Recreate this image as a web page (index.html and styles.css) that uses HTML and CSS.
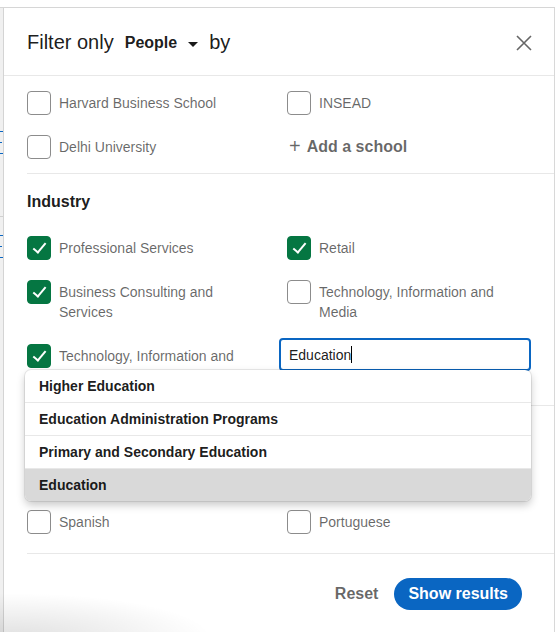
FILE: index.html
```html
<!DOCTYPE html>
<html lang="en">
<head>
  <meta charset="UTF-8">
  <meta name="viewport" content="width=device-width, initial-scale=1.0">
  <title>Filter people</title>
  <link rel="stylesheet" href="styles.css">
</head>
<body>
  <div class="screen">
    <div class="page-edge">
      <span class="edge-link" style="margin-top: 123px"></span>
      <span class="edge-link short" style="margin-top: 10px"></span>
      <span class="edge-link" style="margin-top: 10px"></span>
      <span class="edge-rule" style="margin-top: 62px"></span>
      <span class="edge-link" style="margin-top: 18px"></span>
      <span class="edge-link short" style="margin-top: 10px"></span>
      <span class="edge-link" style="margin-top: 10px"></span>
    </div>

    <div class="modal">
      <div class="modal-header">
        <div class="modal-title">
          Filter only
          <span class="type-select">People <span class="caret"></span></span>
          by
        </div>
        <button class="close-button" aria-label="Dismiss">
          <svg width="16" height="16" viewBox="0 0 16 16">
            <path d="M1 1 L15 15 M15 1 L1 15" stroke="#666" stroke-width="1.6" fill="none"/>
          </svg>
        </button>
      </div>

      <div class="modal-body">
        <div class="filter-section schools">
          <div class="option-grid">
            <label class="option"><span class="checkbox"></span><span class="option-text">Harvard Business School</span></label>
            <label class="option"><span class="checkbox"></span><span class="option-text">INSEAD</span></label>
            <label class="option"><span class="checkbox"></span><span class="option-text">Delhi University</span></label>
            <button class="add-button"><span class="plus">+</span> Add a school</button>
          </div>
        </div>

        <div class="filter-section industry">
          <div class="section-title">Industry</div>
          <div class="option-grid">
            <label class="option"><span class="checkbox checked"></span><span class="option-text">Professional Services</span></label>
            <label class="option"><span class="checkbox checked"></span><span class="option-text">Retail</span></label>
            <label class="option"><span class="checkbox checked"></span><span class="option-text">Business Consulting and Services</span></label>
            <label class="option"><span class="checkbox"></span><span class="option-text">Technology, Information and Media</span></label>
            <label class="option"><span class="checkbox checked"></span><span class="option-text">Technology, Information and Media</span></label>
            <div class="typeahead">
              <div class="typeahead-input">Education<span class="text-cursor"></span></div>
              <ul class="typeahead-menu">
                <li>Higher Education</li>
                <li>Education Administration Programs</li>
                <li>Primary and Secondary Education</li>
                <li class="active">Education</li>
              </ul>
            </div>
          </div>
        </div>

        <div class="filter-section language">
          <div class="section-title">Profile language</div>
          <div class="option-grid">
            <label class="option"><span class="checkbox"></span><span class="option-text">English</span></label>
            <label class="option"><span class="checkbox"></span><span class="option-text">French</span></label>
            <label class="option"><span class="checkbox"></span><span class="option-text">Spanish</span></label>
            <label class="option"><span class="checkbox"></span><span class="option-text">Portuguese</span></label>
          </div>
        </div>
      </div>

      <div class="modal-footer">
        <button class="reset-button">Reset</button>
        <button class="primary-button">Show results</button>
      </div>

      <div class="corner-haze"></div>
    </div>
  </div>
</body>
</html>
```

FILE: styles.css
```css
body {
  margin: 0;
  overflow: hidden;
  background: #fff;
  font-family: "Liberation Sans", Arial, sans-serif;
  color: rgba(0, 0, 0, 0.9);
}

.screen {
  display: flex;
  margin-top: 7px;
  border-top: 1px solid #d6d6d6;
  height: 624px;
  overflow: hidden;
}

/* strip of the page behind the dialog */
.page-edge {
  width: 3px;
  background: #f0f0f0;
  border-right: 1px solid #d4d4d4;
  display: flex;
  flex-direction: column;
}

.edge-link {
  display: block;
  height: 1px;
  background: #0a66c2;
}

.edge-link.short {
  width: 2px;
}

.edge-rule {
  display: block;
  height: 1px;
  background: #d0d0d0;
}

.modal {
  flex: 1;
  position: relative;
  background: #fff;
  border-right: 1px solid #d8d8d8;
  display: flex;
  flex-direction: column;
}

.modal-header {
  height: 67px;
  flex: none;
  display: flex;
  align-items: center;
  justify-content: space-between;
  padding: 0 22px 0 23px;
  border-bottom: 1px solid #e8e8e8;
}

.modal-title {
  font-size: 20px;
  display: flex;
  align-items: center;
  gap: 11px;
  padding-top: 2px;
}

.type-select {
  font-size: 16px;
  font-weight: 700;
  display: flex;
  align-items: center;
  gap: 11px;
  padding-top: 1px;
}

.caret {
  width: 0;
  height: 0;
  border-left: 5px solid transparent;
  border-right: 5px solid transparent;
  border-top: 5px solid rgba(0, 0, 0, 0.9);
  margin-top: 2px;
}

.close-button {
  background: none;
  border: none;
  padding: 0;
  width: 16px;
  height: 16px;
  margin-top: 3px;
  cursor: pointer;
}

.modal-body {
  padding-left: 23px;
}

.filter-section {
  border-bottom: 1px solid #e8e8e8;
}

.schools {
  padding: 15px 0 14px;
}

.industry {
  padding: 16px 0 17px;
}

.language {
  padding: 14px 0 19px;
}

.section-title {
  font-size: 16px;
  font-weight: 700;
  line-height: 24px;
  margin-bottom: 22px;
}

.option-grid {
  width: 504px;
  display: grid;
  grid-template-columns: 260px 244px;
  row-gap: 20px;
}

.option {
  display: flex;
  align-items: flex-start;
  gap: 8px;
  font-size: 14px;
  line-height: 20px;
  color: rgba(0, 0, 0, 0.6);
}

.option-text {
  padding: 2px 0;
  max-width: 200px;
}

.checkbox {
  flex: none;
  width: 22px;
  height: 22px;
  border: 1px solid #8c8c8c;
  border-radius: 4px;
  position: relative;
}

.checkbox.checked {
  background: #057642;
  border-color: #057642;
}

.checkbox.checked::after {
  content: "";
  position: absolute;
  left: 8px;
  top: 3px;
  width: 5px;
  height: 11px;
  border-right: 2px solid #fff;
  border-bottom: 2px solid #fff;
  transform: rotate(40deg);
}

.add-button {
  background: none;
  border: none;
  padding: 0 0 0 2px;
  font-family: inherit;
  font-size: 16px;
  font-weight: 700;
  color: rgba(0, 0, 0, 0.6);
  text-align: left;
  display: flex;
  align-items: center;
  gap: 6px;
  height: 24px;
}

.plus {
  font-size: 20px;
  font-weight: 400;
  margin-top: -2px;
}

.typeahead {
  position: relative;
  margin: -6px 0 0 -8px;
}

.typeahead-input {
  height: 29px;
  border: 2px solid #0a66c2;
  border-radius: 4px;
  padding: 0 8px;
  display: flex;
  align-items: center;
  font-size: 14px;
  color: rgba(0, 0, 0, 0.9);
}

.text-cursor {
  width: 1px;
  height: 17px;
  background: #000;
}

.typeahead-menu {
  position: absolute;
  top: 32px;
  right: 0;
  width: 506px;
  margin: 0;
  padding: 0;
  list-style: none;
  background: #fff;
  border-radius: 6px;
  box-shadow: 0 0 0 1px rgba(0, 0, 0, 0.08), 0 4px 8px rgba(0, 0, 0, 0.22);
  overflow: hidden;
  z-index: 2;
}

.typeahead-menu li {
  height: 32px;
  line-height: 33px;
  padding-left: 14px;
  font-size: 14px;
  font-weight: 700;
  color: rgba(0, 0, 0, 0.9);
  border-bottom: 1px solid #e8e8e8;
}

.typeahead-menu li.active {
  background: #d9d9d9;
  border-bottom: none;
}

.modal-footer {
  display: flex;
  justify-content: flex-end;
  align-items: center;
  gap: 16px;
  padding: 24px 32px 0 0;
}

.reset-button {
  background: none;
  border: none;
  padding: 0;
  font-family: inherit;
  font-size: 16px;
  font-weight: 700;
  color: rgba(0, 0, 0, 0.6);
}

.primary-button {
  height: 32px;
  padding: 0 14px;
  border: none;
  border-radius: 16px;
  background: #0a66c2;
  color: #fff;
  font-family: inherit;
  font-size: 16px;
  font-weight: 700;
}

/* soft shade from the window below the dialog */
.corner-haze {
  position: absolute;
  left: -4px;
  top: 570px;
  width: 240px;
  height: 60px;
  background: radial-gradient(ellipse 200px 45px at 5% 100%, rgba(0, 0, 0, 0.12), rgba(0, 0, 0, 0));
  pointer-events: none;
}
```
